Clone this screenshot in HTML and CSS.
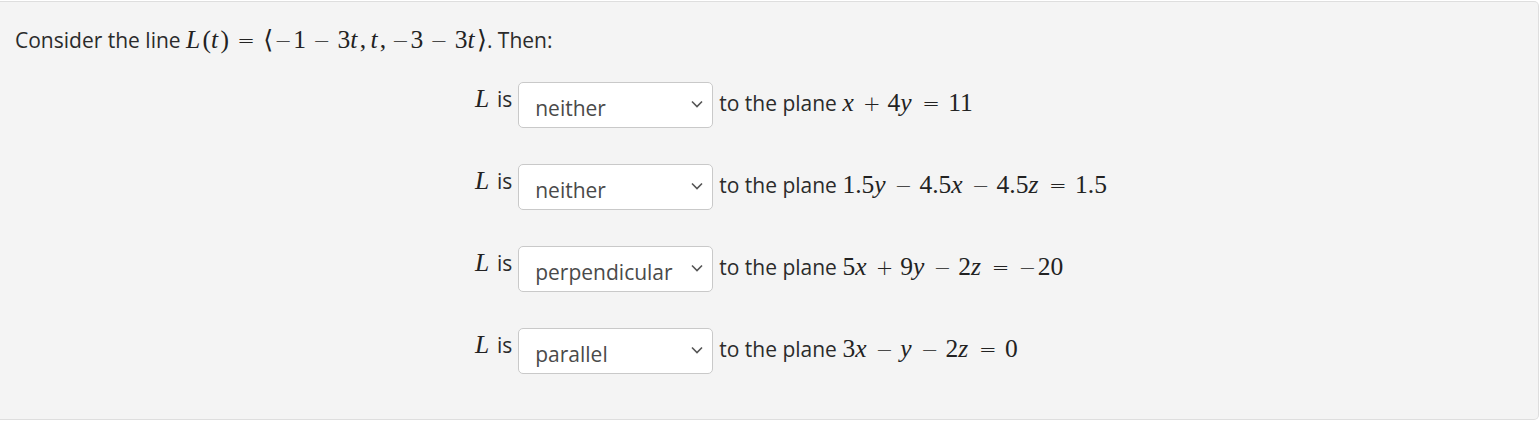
FILE: index.html
```html
<!DOCTYPE html>
<html>
<head>
<meta charset="utf-8">
<link rel="stylesheet" href="styles.css">
</head>
<body>
<div class="panel">
  <p class="intro">Consider the line <span class="math"><span class="mi">L</span><span class="mn">(</span><span class="mi">t</span><span class="mn">)</span><span class="op rel">=</span><span class="mn ang">⟨</span><span class="op">−</span><span class="mn">1</span><span class="op bin">−</span><span class="mn">3</span><span class="mi">t</span><span class="mn">,</span><span class="sp"></span><span class="mi">t</span><span class="mn">,</span><span class="sp"></span><span class="op">−</span><span class="mn">3</span><span class="op bin">−</span><span class="mn">3</span><span class="mi">t</span><span class="mn ang">⟩</span></span>. Then:</p>
  <div class="rows">
    <div class="row">
      <span class="label"><span class="math"><span class="mi">L</span></span> is</span>
      <div class="select"><span class="opt">neither</span><svg class="chev" width="12" height="8" viewBox="0 0 12 8"><path d="M1 1.5 L6 6.5 L11 1.5" fill="none" stroke="#555" stroke-width="1.6"/></svg></div>
      <span class="rest">to the plane <span class="math"><span class="mi">x</span><span class="op bin">+</span><span class="mn">4</span><span class="mi">y</span><span class="op rel">=</span><span class="mn">11</span></span></span>
    </div>
    <div class="row">
      <span class="label"><span class="math"><span class="mi">L</span></span> is</span>
      <div class="select"><span class="opt">neither</span><svg class="chev" width="12" height="8" viewBox="0 0 12 8"><path d="M1 1.5 L6 6.5 L11 1.5" fill="none" stroke="#555" stroke-width="1.6"/></svg></div>
      <span class="rest">to the plane <span class="math"><span class="mn">1.5</span><span class="mi">y</span><span class="op bin">−</span><span class="mn">4.5</span><span class="mi">x</span><span class="op bin">−</span><span class="mn">4.5</span><span class="mi">z</span><span class="op rel">=</span><span class="mn">1.5</span></span></span>
    </div>
    <div class="row">
      <span class="label"><span class="math"><span class="mi">L</span></span> is</span>
      <div class="select"><span class="opt">perpendicular</span><svg class="chev" width="12" height="8" viewBox="0 0 12 8"><path d="M1 1.5 L6 6.5 L11 1.5" fill="none" stroke="#555" stroke-width="1.6"/></svg></div>
      <span class="rest">to the plane <span class="math"><span class="mn">5</span><span class="mi">x</span><span class="op bin">+</span><span class="mn">9</span><span class="mi">y</span><span class="op bin">−</span><span class="mn">2</span><span class="mi">z</span><span class="op rel">=</span><span class="op">−</span><span class="mn">20</span></span></span>
    </div>
    <div class="row">
      <span class="label"><span class="math"><span class="mi">L</span></span> is</span>
      <div class="select"><span class="opt">parallel</span><svg class="chev" width="12" height="8" viewBox="0 0 12 8"><path d="M1 1.5 L6 6.5 L11 1.5" fill="none" stroke="#555" stroke-width="1.6"/></svg></div>
      <span class="rest">to the plane <span class="math"><span class="mn">3</span><span class="mi">x</span><span class="op bin">−</span><span class="mi">y</span><span class="op bin">−</span><span class="mn">2</span><span class="mi">z</span><span class="op rel">=</span><span class="mn">0</span></span></span>
    </div>
  </div>
</div>
</body>
</html>
```

FILE: styles.css
```css
html, body {
  margin: 0;
  padding: 0;
  background: #ffffff;
}
body {
  font-family: "Open Sans", "Noto Sans", sans-serif;
  font-size: 21px;
  color: #2b2b2b;
}
.panel {
  box-sizing: border-box;
  margin-top: 1px;
  width: 1539px;
  height: 419px;
  background: #f4f4f4;
  border: 1px solid #dedede;
  border-left: 0;
  border-radius: 0 5px 5px 0;
  padding: 24px 15px 0 15px;
}
.intro {
  margin: 0;
  line-height: 28px;
}
.math {
  font-family: "Liberation Serif", "DejaVu Serif", serif;
  font-size: 25.5px;
  white-space: nowrap;
  color: #222;
}
.mi {
  font-style: italic;
  padding-right: 0.09em;
}
.ang {
  display: inline-block;
  width: 0.39em;
  text-align: center;
}
.op {
  display: inline-block;
  font-family: "DejaVu Sans", sans-serif;
  font-size: 21px;
  font-weight: 300;
  width: 20px;
  text-align: center;
}
.bin {
  margin: 0 5.8px;
}
.rel {
  margin: 0 7.2px;
}
.sp {
  display: inline-block;
  width: 0.17em;
}
.rows {
  margin-top: 27px;
  margin-left: 460px;
  display: flex;
  flex-direction: column;
  gap: 36px;
}
.row {
  display: flex;
  align-items: flex-start;
  line-height: 28px;
}
.label {
  margin-top: 3px;
  margin-right: 6px;
}
.select {
  box-sizing: border-box;
  width: 195px;
  height: 46px;
  background: #fff;
  border: 1px solid #c9c9c9;
  border-radius: 5px;
  padding: 11px 9px 5px 16px;
  display: flex;
  justify-content: space-between;
  color: #4a4a4a;
}
.chev {
  align-self: center;
  margin-bottom: 8px;
}
.rest {
  margin-top: 7px;
  margin-left: 6px;
}
```
